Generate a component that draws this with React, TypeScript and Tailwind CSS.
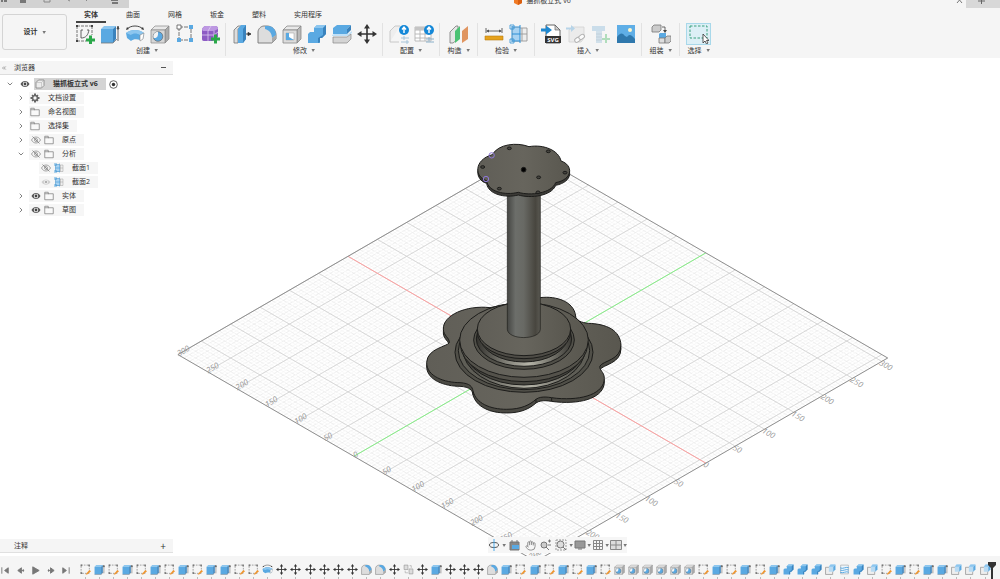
import React, { useState } from 'react';
import { ChevronDown, ChevronRight, ChevronsLeft, Hand } from 'lucide-react';

type IconName =
  | 'sketch' | 'extrude' | 'revolve' | 'hole' | 'pattern' | 'form'
  | 'press' | 'fillet' | 'shell' | 'combine' | 'split' | 'move'
  | 'config' | 'configTable' | 'plane' | 'measure' | 'section'
  | 'svg' | 'link' | 'fastener' | 'canvas' | 'assemble' | 'select'
  | 'sketchEdit' | 'component' | 'thread' | 'cut'
  | 'eye' | 'eyeDim' | 'eyeOff' | 'folder' | 'gear' | 'body' | 'target';

const BLUE = '#5aa9e2';
const DARK_BLUE = '#3a83bd';

// All icons are drawn on a 20x20 board
const ICONS: Record<IconName, React.ReactNode> = {
  sketch: (
    <>
      <path d="M2 2h15M2 2v15M17 2v9M2 17h9" stroke="#555" strokeWidth="0.8" strokeDasharray="3 1" fill="none" />
      <path d="M6 14V6M6 14c5 0 7-3 8-8M6 6h2M12 6h2" stroke="#555" strokeWidth="0.9" fill="none" />
      <path d="M1 1h2v2H1zM16 1h2v2h-2zM1 16h2v2H1z" fill="#444" />
      <path d="M14 11.500h3v3h3v3h-3v3h-3v-3h-3v-3h3z" fill="#2ba84a" />
    </>
  ),
  extrude: (
    <>
      <path d="M1 5l3-3h12l-3 3z" fill="#8cc6ef" />
      <path d="M1 5h12v14H1z" fill={BLUE} />
      <path d="M13 5l3-3v13l-3 4z" fill={DARK_BLUE} />
      <path d="M18 17V3M17 5l1-3 1 3z" stroke="#444" strokeWidth="0.8" fill="#444" />
      <path d="M1 19h12l4-4" stroke="#777" strokeWidth="0.8" fill="none" />
    </>
  ),
  revolve: (
    <>
      <path d="M1 9c5-4 13-4 18 0l-1 6-3 1c-3-1-7-1-9 1l-4-3z" fill={BLUE} />
      <path d="M1 9c5-4 13-4 18 0l-4 2c-3-2-7-2-9 0z" fill="#8cc6ef" />
      <path d="M15 11l4-2-1 6-3 2z" fill="#fff" stroke="#888" strokeWidth="0.6" />
      <path d="M2 5c4-4 12-4 16 0" stroke="#333" strokeWidth="0.9" fill="none" />
      <path d="M1 6l1-3 2 2zM19 6l-1-3-2 2z" fill="#333" />
    </>
  ),
  hole: (
    <>
      <path d="M1 6l4-4h14l-4 4z" fill="#e8e8e8" stroke="#888" strokeWidth="0.7" />
      <path d="M15 6l4-4v13l-4 4z" fill="#aaa" stroke="#888" strokeWidth="0.7" />
      <path d="M1 6h14v13H1z" fill="#d6d6d6" stroke="#888" strokeWidth="0.7" />
      <circle cx="8" cy="12.500" r="4.800" fill={BLUE} stroke="#666" strokeWidth="0.7" />
      <path d="M8 7.700a4.800 4.800 0 0 0-4.500 6c3 1 5-1 4.500-6z" fill="#f3f3f3" />
    </>
  ),
  pattern: (
    <>
      <path d="M4 3h12M4 3v13M4 16h12M16 5v10" stroke="#555" strokeWidth="0.8" strokeDasharray="4 1" />
      <path d="M2 1h4v4H2z" fill="#fff" stroke="#555" strokeWidth="0.8" />
      <path d="M14 1h4v4h-4zM2 14h4v4H2zM14 14h4v4h-4z" fill={BLUE} />
    </>
  ),
  form: (
    <>
      <path d="M2 6c0-2 2-4 4-4h9c2 0 3 1 3 3v8l-4 4H4c-2 0-2-1-2-3z" fill="#8d5cc4" />
      <path d="M2 6c0-2 2-4 4-4h9c2 0 3 1 3 3l-4 2H3z" fill="#bd98e2" />
      <path d="M2 11h12l4-3M8 17V7l3-5M14 17V7" stroke="#dccaf0" strokeWidth="0.8" fill="none" />
      <path d="M14 10.500h3v3h3v3h-3v3h-3v-3h-3v-3h3z" fill="#2ba84a" />
    </>
  ),
  press: (
    <>
      <path d="M2 6l4-4h3L6 5v14H2z" fill="#ddd" stroke="#777" strokeWidth="0.8" />
      <path d="M6 5l3-4h5v14l-3 4H6z" fill={BLUE} />
      <path d="M11 5l3-4v14l-3 4z" fill={DARK_BLUE} />
      <path d="M14 10h3M16 8.500l3 1.500-3 1.500z" stroke="#333" strokeWidth="0.9" fill="#333" />
    </>
  ),
  fillet: (
    <>
      <path d="M1 19V8c0-3 3-6 6-6h3c5 0 9 4 9 9v4l-4 4z" fill="#ddd" stroke="#777" strokeWidth="0.9" />
      <path d="M8 2h3c5 0 8 4 8 9l-4 3c0-5-3-8-7-9z" fill={BLUE} />
      <path d="M15 19v-5l4-3v4z" fill="#aaa" />
    </>
  ),
  shell: (
    <>
      <path d="M1 6l4-4h14l-4 4z" fill="#e8e8e8" stroke="#888" strokeWidth="0.8" />
      <path d="M15 6l4-4v13l-4 4z" fill="#b8b8b8" stroke="#888" strokeWidth="0.8" />
      <path d="M1 6h14v13H1z" fill="#dcdcdc" stroke="#888" strokeWidth="0.8" />
      <path d="M4 9h8v7H4z" fill="#fff" stroke="#999" strokeWidth="0.5" />
      <path d="M4 9h3v4l5 3H4z" fill={BLUE} />
    </>
  ),
  combine: (
    <>
      <path d="M7 4l3-3h9v9l-4 4H7z" fill={BLUE} />
      <path d="M1 10l2-2h5V4h7v9h-2v6H1z" fill={BLUE} />
      <path d="M7 4l3-3h9l-3 3z" fill="#8cc6ef" />
      <path d="M16 4l3-3v9l-4 4h-2v4l-2 1v-5l5-3z" fill={DARK_BLUE} />
    </>
  ),
  split: (
    <>
      <path d="M1 4l4-3h14l-4 4v5H1z" fill={BLUE} />
      <path d="M15 5l4-4v5l-4 4z" fill={DARK_BLUE} />
      <path d="M0 11l2-1h14l4-3v2l-4 3H0z" fill="#bfe0f7" />
      <path d="M1 13h14l4-3v5l-4 4H1z" fill="#d4d4d4" stroke="#888" strokeWidth="0.7" />
    </>
  ),
  move: (
    <>
      <path d="M10 3v14M3 10h14" stroke="#333" strokeWidth="1.600" />
      <path d="M10 0l3 4.500H7zM10 20l3-4.500H7zM0 10l4.500-3v6zM20 10l-4.500-3v6z" fill="#333" />
    </>
  ),
  config: (
    <>
      <path d="M1 18V7l5-5h5M1 18h9" fill="#eee" stroke="#c4c4c4" strokeWidth="0.9" />
      <path d="M12 14h8M12 18h8M15 12v4M18 16v4" stroke="#9fbfd6" strokeWidth="0.9" />
      <circle cx="15" cy="6" r="5" fill="#1488d8" />
      <path d="M15 3v6M13 5.500l2-2.500 2 2.500" stroke="#fff" strokeWidth="1.400" fill="none" />
    </>
  ),
  configTable: (
    <>
      <path d="M1 3h16v14H1zM1 6h16M1 10h16M1 14h16M6 3v14M11 3v14" fill="#fff" stroke="#b4b4b4" strokeWidth="0.9" />
      <path d="M1 3h10v3H1z" fill="#c4c4c4" />
      <path d="M12 15h8M12 18h8M15 13v4" stroke="#7fa9c6" strokeWidth="0.9" />
      <circle cx="15" cy="6" r="5" fill="#1488d8" />
      <path d="M15 3v6M13 5.500l2-2.500 2 2.500" stroke="#fff" strokeWidth="1.400" fill="none" />
    </>
  ),
  plane: (
    <>
      <path d="M1 8l6-6h2v13l-5 4H1z" fill="#e6e6e6" stroke="#777" strokeWidth="0.8" />
      <path d="M6 7l5-5v13l-5 4z" fill="#4cc274" />
      <path d="M13 7l6-5v13l-6 4z" fill="#e09560" />
    </>
  ),
  measure: (
    <>
      <path d="M1 12h18v4H1z" fill="#e6a21c" stroke="#b97d10" strokeWidth="0.6" />
      <path d="M2 4v5M18 4v5M3 7h14" stroke="#555" strokeWidth="0.9" />
      <path d="M2 7l3-1.500v3zM18 7l-3-1.500v3z" fill="#555" />
    </>
  ),
  section: (
    <>
      <path d="M4 4h14v13H4zM4 10h14M13 4v13" fill="#eee" stroke="#999" strokeWidth="0.9" />
      <path d="M4 4h7v13H4z" fill="#a9d3f2" />
      <path d="M3 2v16M11 1v18M3 3h8M3 10h8M3 17h8" stroke="#2c8fd6" strokeWidth="1" />
      <path d="M1 1h4v4H1zM1 15h4v4H1z" fill="none" stroke="#2c8fd6" strokeWidth="0.8" />
    </>
  ),
  svg: (
    <>
      <path d="M5 1h9l5 5v13H5z" fill="#fff" stroke="#555" strokeWidth="0.9" />
      <path d="M14 1l5 5h-5z" fill="#ccc" stroke="#555" strokeWidth="0.6" />
      <path d="M4 12h16v7H4z" fill="#333" />
      <text x="12" y="17.800" fontSize="6" fontWeight="700" fill="#fff" textAnchor="middle">SVG</text>
      <path d="M0 4.500h5V1.500L11 6l-6 4.500v-3H0z" fill="#1e88d0" />
    </>
  ),
  link: (
    <g opacity="0.600">
      <path d="M3 6l3-3h12v11l-3 4H3z" fill="#e6e6e6" stroke="#bbb" strokeWidth="0.8" />
      <path d="M0 3.500h5V1l4 3.500L5 8V5.500H0z" fill="#8fbfe0" />
      <g transform="rotate(-35 14 14)" fill="#fff" stroke="#888" strokeWidth="1">
        <rect x="8" y="12" width="6" height="4" rx="2" />
        <rect x="13" y="12" width="6" height="4" rx="2" />
      </g>
    </g>
  ),
  fastener: (
    <g opacity="0.700">
      <path d="M1 2h13v5H1z" fill="#b8d4e6" />
      <path d="M5 7h6v12H5z" fill="#c3d8e6" />
      <path d="M5 10h6M5 13h6M5 16h6" stroke="#a5bccb" strokeWidth="0.8" />
      <path d="M14 10h2v4h3v2h-3v3h-2v-3h-3v-2h3z" fill="#93d3a5" />
    </g>
  ),
  canvas: (
    <>
      <path d="M1 1h18v18H1z" fill="#5faee6" />
      <path d="M1 13c3-4 5-5 8-1l2 1c2-3 4-3 8 2v4H1z" fill="#2f78ad" />
      <circle cx="14" cy="6" r="2" fill="#fff6c9" />
    </>
  ),
  assemble: (
    <>
      <path d="M1 3l2-2h7v5L8 8H1z" fill="#ccc" stroke="#777" strokeWidth="0.8" />
      <path d="M11 3h3v3" fill="none" stroke="#444" strokeWidth="0.8" />
      <path d="M12 6h4l-2 3z" fill="#444" />
      <path d="M8 10l1-1h6v5H8z" fill={BLUE} />
      <path d="M8 14h6v5H8z" fill="#ddd" stroke="#777" strokeWidth="0.8" />
      <path d="M14 14l2-2h4v5l-2 2h-4z" fill="#ccc" stroke="#777" strokeWidth="0.8" />
    </>
  ),
  select: (
    <>
      <path d="M1 2h17v12H1z" fill="none" stroke="#38a07c" strokeWidth="1" strokeDasharray="2.500 1.500" />
      <path d="M14 10v9l2-2 1.500 3 1.500-1-1.500-2.500H20z" fill="#fff" stroke="#333" strokeWidth="0.8" />
    </>
  ),
  sketchEdit: (
    <>
      <path d="M2 2h15v15H2z" stroke="#777" strokeWidth="1.200" strokeDasharray="3 2" fill="none" />
      <path d="M1 1h3v3H1zM15 1h3v3h-3zM1 15h3v3H1z" fill="#777" />
      <path d="M10 19l7-8 3 2-7 6z" fill="#f0962e" />
    </>
  ),
  component: (
    <>
      <path d="M2 2h7v8H2zM11 9h7v9h-7z" fill="#ddd" stroke="#999" strokeWidth="1.200" />
      <path d="M4 12v4h5M12 3h3v4" stroke="#999" strokeWidth="1" fill="none" />
    </>
  ),
  thread: (
    <>
      <path d="M3 2h14v16H3z" fill="#eef6fc" stroke="#999" strokeWidth="1" />
      <path d="M2 7c5 3 11-3 16 0M2 11c5 3 11-3 16 0M2 15c5 3 11-3 16 0" stroke={BLUE} strokeWidth="1.800" fill="none" />
    </>
  ),
  cut: (
    <>
      <path d="M1 6h13v13H1z" fill="#eee" stroke="#888" strokeWidth="1.200" />
      <path d="M7 5l3-4h9l-4 4v9H7z" fill="#b9daf2" />
      <path d="M15 5l4-4v9l-4 4z" fill={BLUE} />
      <path d="M7 5l3-4h9l-4 4z" fill="#8cc6ef" />
    </>
  ),
  eye: (
    <>
      <path d="M1 10c4-8 14-8 18 0-4 8-14 8-18 0z" fill="#555" />
      <circle cx="10" cy="10" r="4.500" fill="#f6f6f6" />
      <circle cx="10" cy="10" r="2.800" fill="#444" />
    </>
  ),
  eyeDim: (
    <>
      <path d="M1 10c4-7 14-7 18 0-4 7-14 7-18 0z" fill="#d0d0d0" />
      <circle cx="10" cy="10" r="4" fill="#f6f6f6" />
      <circle cx="10" cy="10" r="2.500" fill="#b0b0b0" />
    </>
  ),
  eyeOff: (
    <>
      <path d="M1 10c4-8 14-8 18 0-4 8-14 8-18 0z" fill="none" stroke="#888" strokeWidth="1.500" />
      <circle cx="10" cy="10" r="3" fill="none" stroke="#888" strokeWidth="1.500" />
      <path d="M3 3l14 14" stroke="#777" strokeWidth="1.500" />
    </>
  ),
  folder: (
    <path d="M1.500 17.500v-15h7v3h10v12zM1.500 5.500h8" fill="#f9f9f9" stroke="#777" strokeWidth="1.400" />
  ),
  gear: (
    <>
      <path d="M8 1h4v3h-4zM8 16h4v3h-4zM1 8h3v4H1zM16 8h3v4h-3zM3 5l2-2 2 2-2 2zM13 5l2-2 2 2-2 2zM3 15l2-2 2 2-2 2zM13 15l2-2 2 2-2 2z" fill="#666" />
      <circle cx="10" cy="10" r="5" fill="#f6f6f6" stroke="#666" strokeWidth="3.400" />
    </>
  ),
  body: (
    <>
      <path d="M2 7l5-5h11v11l-5 5H2z" fill="#ececec" stroke="#777" strokeWidth="1.400" strokeLinejoin="round" />
      <path d="M2 7h11v11M13 7l5-5" fill="none" stroke="#aaa" strokeWidth="1" />
    </>
  ),
  target: (
    <>
      <circle cx="10" cy="10" r="8.500" fill="#fff" stroke="#444" strokeWidth="1.800" />
      <circle cx="10" cy="10" r="3.800" fill="#333" />
    </>
  ),
};

function Icon({ name, className }: { name: IconName; className: string }) {
  return (
    <svg viewBox="0 0 20 20" className={className} aria-hidden="true">
      {ICONS[name]}
    </svg>
  );
}

function Caret() {
  return (
    <svg viewBox="0 0 4 3" className="h-[3px] w-1 shrink-0" aria-hidden="true">
      <path d="M0.500 0h3.500L2 3z" fill="#777" />
    </svg>
  );
}

const TABS = ['实体', '曲面', '网格', '钣金', '塑料', '实用程序'];

const GROUPS: { label: string; icons: IconName[] }[] = [
  { label: '创建', icons: ['sketch', 'extrude', 'revolve', 'hole', 'pattern', 'form'] },
  { label: '修改', icons: ['press', 'fillet', 'shell', 'combine', 'split', 'move'] },
  { label: '配置', icons: ['config', 'configTable'] },
  { label: '构造', icons: ['plane'] },
  { label: '检验', icons: ['measure', 'section'] },
  { label: '插入', icons: ['svg', 'link', 'fastener', 'canvas'] },
  { label: '组装', icons: ['assemble'] },
  { label: '选择', icons: ['select'] },
];

function TitleBar() {
  return (
    <div className="flex h-2 items-start justify-between">
      <div className="h-2 w-[129px] bg-[#d2d2d2]">
        <svg viewBox="0 0 129 8" className="h-2 w-[129px]" aria-hidden="true">
          <path d="M1 0h2v2H1zM4 0h3v2H4zM20 0h6v3h-6z" fill="#777" />
          <path d="M44 0v2h6V0M68 0l2 1M86 0l1 1" stroke="#888" fill="none" />
          <path d="M111 0h7v1h-7zM112 2h6v2h-6z" fill="#777" />
        </svg>
      </div>
      <div className="flex h-2 items-start gap-1">
        <svg viewBox="0 0 8 5" className="h-[5px] w-2" aria-hidden="true">
          <path d="M0 0h8v3L4 5 0 3z" fill="#f07a24" />
          <path d="M4 0h4v3L4 5z" fill="#d95f10" />
        </svg>
        <span className="-mt-[3px] leading-[8px]">猫抓板立式 v6</span>
      </div>
      <div className="flex h-2 items-start">
        <svg viewBox="0 0 10 8" className="h-2 w-[10px]" aria-hidden="true">
          <path d="M1 3l2.500-3L6 3" stroke="#777" fill="none" />
        </svg>
        <svg viewBox="0 0 34 8" className="h-2 w-[34px] bg-[#d8d8d8]" aria-hidden="true">
          <path d="M12 1h7M15.500 0v4" stroke="#666" />
        </svg>
      </div>
    </div>
  );
}

function Ribbon() {
  const [tab, setTab] = useState('实体');
  return (
    <div className="flex h-[50px] pl-[2px]">
      <button className="mt-[6px] flex h-9 w-[65px] shrink-0 items-center justify-center gap-1 rounded-[3px] border border-[#d4d4d4] font-bold">
        设计 <Caret />
      </button>
      <div className="flex flex-col pl-[2px]">
        <div className="flex gap-3 pl-[7px]" role="tablist">
          {TABS.map((t) => (
            <button
              key={t}
              role="tab"
              aria-selected={t === tab}
              onClick={() => setTab(t)}
              className={
                t === tab
                  ? 'h-[15px] border-b-2 border-[#444] px-2 pt-px font-bold'
                  : 'h-[15px] border-b-2 border-transparent px-2 pt-px'
              }
            >
              {t}
            </button>
          ))}
        </div>
        <div className="flex">
          {GROUPS.map((g) => (
            <div
              key={g.label}
              className={`flex flex-col items-center border-r border-[#e2e2e2] last:border-0 ${g.icons.length === 1 ? 'px-[6px]' : 'px-[3px]'}`}
            >
              <div className="flex">
                {g.icons.map((name) => (
                  <button
                    key={name}
                    aria-label={name}
                    className={
                      name === 'select'
                        ? 'flex h-[22px] w-[25px] items-center justify-center border border-[#a8d8ea] bg-[#dceff6]'
                        : 'flex h-[22px] w-[25px] items-center justify-center'
                    }
                  >
                    <Icon name={name} className="h-5 w-5" />
                  </button>
                ))}
              </div>
              <button className="flex h-[11px] items-center gap-1 leading-[11px]">
                {g.label} <Caret />
              </button>
            </div>
          ))}
        </div>
      </div>
    </div>
  );
}

const TREE: { label: string; icon: IconName; eye?: IconName; open?: boolean; leaf?: boolean }[] = [
  { label: '文档设置', icon: 'gear' },
  { label: '命名视图', icon: 'folder' },
  { label: '选择集', icon: 'folder' },
  { label: '原点', icon: 'folder', eye: 'eyeOff' },
  { label: '分析', icon: 'folder', eye: 'eyeOff', open: true },
  { label: '截面1', icon: 'section', eye: 'eyeOff', leaf: true },
  { label: '截面2', icon: 'section', eye: 'eyeDim', leaf: true },
  { label: '实体', icon: 'folder', eye: 'eye' },
  { label: '草图', icon: 'folder', eye: 'eye' },
];

function EyeButton({ icon }: { icon: IconName }) {
  return (
    <button aria-label="显示/隐藏" className="flex w-[14px] justify-center">
      <Icon name={icon} className="h-[10px] w-[10px]" />
    </button>
  );
}

function Browser() {
  return (
    <section className="absolute left-0 top-[3px] w-[173px]">
      <div className="flex h-[14px] items-center border-b border-[#ddd] bg-[#f5f5f5] pl-[1px] pr-[7px]">
        <ChevronsLeft className="h-[6px] w-[6px] text-[#555]" />
        <h2 className="flex-1 pl-[7px]">浏览器</h2>
        <button aria-label="折叠" className="h-px w-[5px] bg-[#555]" />
      </div>
      <ul className="pt-[2px]">
        <li className="flex h-[14px] items-center pl-[6px]">
          <ChevronDown className="mr-1 h-2 w-2 text-[#444]" />
          <EyeButton icon="eye" />
          <button className="ml-[2px] flex h-3 items-center gap-2 bg-[#d4d4d4] pl-[1px] pr-2 font-bold">
            <Icon name="body" className="h-[10px] w-[10px]" />
            猫抓板立式 v6
          </button>
          <button aria-label="激活" className="pl-[3px]">
            <Icon name="target" className="h-[9px] w-[9px]" />
          </button>
        </li>
        {TREE.map((n) => (
          <li key={n.label} className={`flex h-[14px] items-center ${n.leaf ? 'pl-[39px]' : 'pl-[17px]'}`}>
            {!n.leaf && (n.open
              ? <ChevronDown className="mr-1 h-2 w-2 text-[#444]" />
              : <ChevronRight className="mr-1 h-2 w-2 text-[#444]" />)}
            <div className="flex h-3 items-center bg-[#f6f6f6] pr-2">
              {n.eye && <EyeButton icon={n.eye} />}
              <button className="flex items-center gap-2 pl-[1px]">
                <Icon name={n.icon} className="h-[10px] w-[10px]" />
                {n.label}
              </button>
            </div>
          </li>
        ))}
      </ul>
    </section>
  );
}

// Ground grid: a major line every 50 mm, the origin sits at CX/CY
const CX = 524;
const CY = 358;
const SX = 29.33;
const SY = 16.95;

const at = (a: number, b: number): [number, number] => [CX + (a - b) * SX, CY + (a + b) * SY];

function seg(p: [number, number], q: [number, number]) {
  return `M${p[0].toFixed(1)} ${p[1].toFixed(1)}L${q[0].toFixed(1)} ${q[1].toFixed(1)}`;
}

// n is the number of lines per 50 mm
function gridPath(n: number) {
  let d = '';
  for (let i = -6 * n; i <= 6.2 * n; i++) d += seg(at(i / n, -6.2), at(i / n, 5.8));
  for (let i = Math.ceil(-6.2 * n); i <= 5.8 * n; i++) d += seg(at(-6, i / n), at(6.2, i / n));
  return d;
}

const LEFT_MARKS = [-6, -5, -4, -3, -2, -1, 0, 1, 2, 3, 4, 5, 6];
const RIGHT_MARKS = [-6, -5, -4, -3, -2, -1, 0, 1, 2, 3, 4];

function Grid() {
  const corners = [at(-6, -6.2), at(6.2, -6.2), at(6.2, 5.8), at(-6, 5.8)];
  return (
    <g fill="none">
      <path d={gridPath(10)} stroke="#f4f4f4" strokeWidth="0.600" />
      <path d={gridPath(5)} stroke="#ebebeb" strokeWidth="0.600" strokeDasharray="4 2" />
      <path d={gridPath(1)} stroke="#d2d2d2" strokeWidth="0.800" />
      <path d={seg(at(-6, 0), at(6.2, 0))} stroke="#ffa0a0" />
      <path d={seg(at(0, -6.2), at(0, 5.8))} stroke="#86f086" />
      <polygon points={corners.map((c) => c.join(',')).join(' ')} stroke="#8f8f8f" />
      <g fill="#999" fontSize="8" fontStyle="italic">
        {LEFT_MARKS.map((m) => {
          const [x, y] = at(m, 5.8);
          return <text key={m} transform={`translate(${x + 1} ${y + 2}) rotate(-30)`}>{Math.abs(m) * 50}</text>;
        })}
        {RIGHT_MARKS.map((m) => {
          const [x, y] = at(6.2, m);
          return <text key={m} transform={`translate(${x - 3} ${y + 3}) rotate(30)`}>{Math.abs(m) * 50}</text>;
        })}
      </g>
    </g>
  );
}

const BASE =
  'M240 533C170 525 98 555 100 598C101 618 118 622 118 638C112 650 52 655 50 697C49 740 105 758 150 758C180 760 187 770 189 783C198 820 240 838 290 838C335 838 360 824 378 808C395 796 420 803 440 805C520 812 583 790 583 745C583 725 566 720 570 708C580 692 633 690 633 645C630 600 590 582 535 580C515 578 497 572 497 558C492 515 440 497 390 503Z';
const TOP =
  'M247 74C265 42 320 36 357 50C402 42 447 62 453 93C490 105 490 148 437 158C425 190 362 198 325 187C285 197 234 185 230 152C194 142 190 90 247 74Z';
const HOLES = [[298, 55], [415, 64], [218, 111], [465, 128], [386, 142], [268, 176], [384, 187]];

function Stand() {
  return (
    <g transform="translate(410 130) scale(0.3333)" stroke="#1c1c1a" strokeWidth="3" strokeLinejoin="round">
      <defs>
        <linearGradient id="pillar">
          <stop offset="0" stopColor="#454643" />
          <stop offset="0.250" stopColor="#6c6e6a" />
          <stop offset="0.500" stopColor="#686964" />
          <stop offset="0.850" stopColor="#48463f" />
          <stop offset="1" stopColor="#5a5952" />
        </linearGradient>
        <linearGradient id="plate">
          <stop offset="0" stopColor="#605e57" />
          <stop offset="0.500" stopColor="#67655d" />
          <stop offset="1" stopColor="#59574f" />
        </linearGradient>
        <linearGradient id="groove">
          <stop offset="0" stopColor="#34332f" />
          <stop offset="0.350" stopColor="#8a8980" />
          <stop offset="0.550" stopColor="#b5b4a8" />
          <stop offset="1" stopColor="#3c3b36" />
        </linearGradient>
      </defs>
      <path d={BASE} transform="translate(0 11)" fill="#4a4943" />
      <path d={BASE} fill="url(#plate)" />
      <path d="M189 785v10M378 808v10M425 804v10" />
      <ellipse cx="342" cy="667" rx="207" ry="120" fill="#504f48" />
      <ellipse cx="342" cy="662" rx="197" ry="117" fill="#5f5e56" />
      <ellipse cx="342" cy="655" rx="184" ry="120" fill="url(#groove)" />
      <ellipse cx="342" cy="650" rx="182" ry="115" fill="#46453f" />
      <ellipse cx="342" cy="642" rx="191" ry="113" fill="#54524b" />
      <ellipse cx="342" cy="630" rx="193" ry="112" fill="url(#plate)" />
      <ellipse cx="342" cy="630" rx="151" ry="88" fill="#504f48" />
      <ellipse cx="342" cy="627" rx="143" ry="82" fill="url(#groove)" />
      <ellipse cx="342" cy="617" rx="132" ry="79" fill="#46453f" />
      <ellipse cx="342" cy="606" rx="140" ry="80" fill="#4e4c46" />
      <ellipse cx="342" cy="597" rx="140" ry="80" fill="url(#plate)" />
      <path d="M292 180V598C294 631 389 631 391 598V180Z" fill="url(#pillar)" strokeWidth="2" />
      <path d={TOP} transform="translate(0 8)" fill="#3c3b37" />
      <path d={TOP} fill="url(#plate)" />
      {HOLES.map(([x, y]) => (
        <ellipse key={x} cx={x} cy={y} rx="6" ry="4" fill="#45443f" />
      ))}
      <circle cx="341" cy="119" r="7" fill="#000" />
      <g fill="none" stroke="#8f78d8">
        <circle cx="245" cy="76" r="8" />
        <circle cx="228" cy="147" r="8" />
      </g>
    </g>
  );
}

function NavBar() {
  return (
    <div className="absolute bottom-[3px] left-[488px] flex h-4 items-center bg-[#f6f6f6]">
      <button aria-label="动态观察" className="flex w-[18px] items-center justify-between">
        <svg viewBox="0 0 12 12" className="h-3 w-3">
          <ellipse cx="6" cy="6" rx="4.500" ry="2.500" fill="none" stroke="#555" />
          <path d="M6 0v12" stroke="#4aa8e8" />
        </svg>
        <Caret />
      </button>
      <button aria-label="观察方向" className="flex w-[15px] justify-end">
        <svg viewBox="0 0 12 12" className="h-3 w-3">
          <path d="M1 3h9v8H1zM3 1v3M8 1v3" fill="#888" stroke="#777" />
          <path d="M3 6h7v4H3z" fill={BLUE} />
        </svg>
      </button>
      <button aria-label="平移" className="flex w-[15px] justify-end"><Hand className="h-[11px] w-[11px] text-[#888]" /></button>
      <button aria-label="缩放" className="flex w-[15px] justify-end">
        <svg viewBox="0 0 12 12" className="h-3 w-3">
          <circle cx="5" cy="6" r="3" fill="#ccc" stroke="#777" />
          <path d="M7 8l3 3M9 2h3M10.500 0.500v3M9 6h3" stroke="#777" />
        </svg>
      </button>
      <button aria-label="窗口缩放" className="flex w-[22px] items-center justify-between pl-1">
        <svg viewBox="0 0 12 12" className="h-3 w-3">
          <path d="M1 1h10v10H1z" fill="none" stroke="#999" strokeDasharray="2 1" />
          <circle cx="5.500" cy="5.500" r="3.500" fill="#ddd" stroke="#777" />
          <path d="M8 8l3 3" stroke="#777" />
        </svg>
        <Caret />
      </button>
      <button aria-label="显示设置" className="flex w-[18px] items-center justify-between pl-[1px]">
        <svg viewBox="0 0 12 12" className="h-3 w-3">
          <path d="M1 2h10v7H1zM4 10h4" fill="#999" stroke="#777" />
        </svg>
        <Caret />
      </button>
      <button aria-label="栅格" className="flex w-[18px] items-center justify-between pl-[1px]">
        <svg viewBox="0 0 12 12" className="h-3 w-3">
          <path d="M1.500 1.500h9v9h-9zM4.500 1v10M7.500 1v10M1 4.500h10M1 7.500h10" fill="none" stroke="#888" />
        </svg>
        <Caret />
      </button>
      <button aria-label="视口" className="flex w-[18px] items-center justify-between pl-[1px]">
        <svg viewBox="0 0 12 12" className="h-3 w-3">
          <path d="M0.500 1.500h11v9H0.500zM6 2v8M1 6h10" fill="#ddd" stroke="#888" />
        </svg>
        <Caret />
      </button>
    </div>
  );
}

const STEPS = [
  // s sketch, e extrude, r revolve, m move, f fillet, k component, h hole, j join, c cut, t thread
  ...'sesesesesee', ...'ssrmmmmmm', ...'ffmkmemmm', ...'fesesesesh', ...'hhhhhsesese', ...'jjjctjc', ...'seseeccc',
];

const STEP_ICONS: Record<string, IconName> = {
  s: 'sketchEdit',
  e: 'extrude',
  r: 'revolve',
  m: 'move',
  f: 'fillet',
  k: 'component',
  h: 'hole',
  j: 'combine',
  c: 'cut',
  t: 'thread',
};

const PLAYBACK = [
  { label: '起点', d: 'M2 2.500v7M9 3L5 6l4 3z' },
  { label: '上一步', d: 'M7 3L3 6l4 3zM7 6h3M9 4.500v3' },
  { label: '播放', d: 'M3 2l7 4-7 4z' },
  { label: '下一步', d: 'M6 3l4 3-4 3zM6 6H3M4 4.500v3' },
  { label: '终点', d: 'M10 2.500v7M3 3l4 3-4 3z' },
];

function Timeline() {
  return (
    <footer className="flex h-[23px] shrink-0 bg-[#f5f5f5] pr-1 pt-2">
      <div className="flex w-[78px] shrink-0 items-start gap-1 pt-[1px]">
        {PLAYBACK.map((p) => (
          <button key={p.label} aria-label={p.label}>
            <svg viewBox="0 0 12 12" className="h-[11px] w-[11px]">
              <path d={p.d} fill="#777" stroke="#777" />
            </svg>
          </button>
        ))}
      </div>
      <ol className="flex min-w-0 flex-1">
        {STEPS.map((s, i) => (
          <li key={i} className="flex flex-1 flex-col items-center">
            <button aria-label={`步骤 ${i + 1}`}><Icon name={STEP_ICONS[s]} className="h-[11px] w-[11px]" /></button>
            <span className="mt-[2px] h-[2px] w-px bg-[#bbb]" />
          </li>
        ))}
      </ol>
      <svg viewBox="0 0 8 18" className="-ml-1 -mt-[2px] h-[18px] w-2 shrink-0" aria-hidden="true">
        <path d="M0 0h8v3L5 6v12H3V6L0 3z" fill="#333" />
      </svg>
    </footer>
  );
}

function App() {
  return (
    <div className="flex h-screen flex-col overflow-hidden bg-white font-['Open_Sans','Noto_Sans_CJK_SC',sans-serif] text-[7px] leading-[10px] text-[#333]">
      <header className="shrink-0 bg-[#f5f5f5]">
        <TitleBar />
        <Ribbon />
      </header>
      <main className="relative min-h-0 flex-1">
        <svg viewBox="0 58 1000 498" className="h-full w-full" role="img" aria-label="模型视图">
          <Grid />
          <Stand />
        </svg>
        <Browser />
        <section className="absolute bottom-[3px] left-0 flex h-[14px] w-[173px] items-center justify-between border-b border-[#e0e0e0] bg-[#f5f5f5] pl-[14px] pr-[7px]">
          <h2>注释</h2>
          <button aria-label="添加注释" className="text-[10px] leading-[10px]">+</button>
        </section>
        <NavBar />
      </main>
      <Timeline />
    </div>
  );
}

export default App;
